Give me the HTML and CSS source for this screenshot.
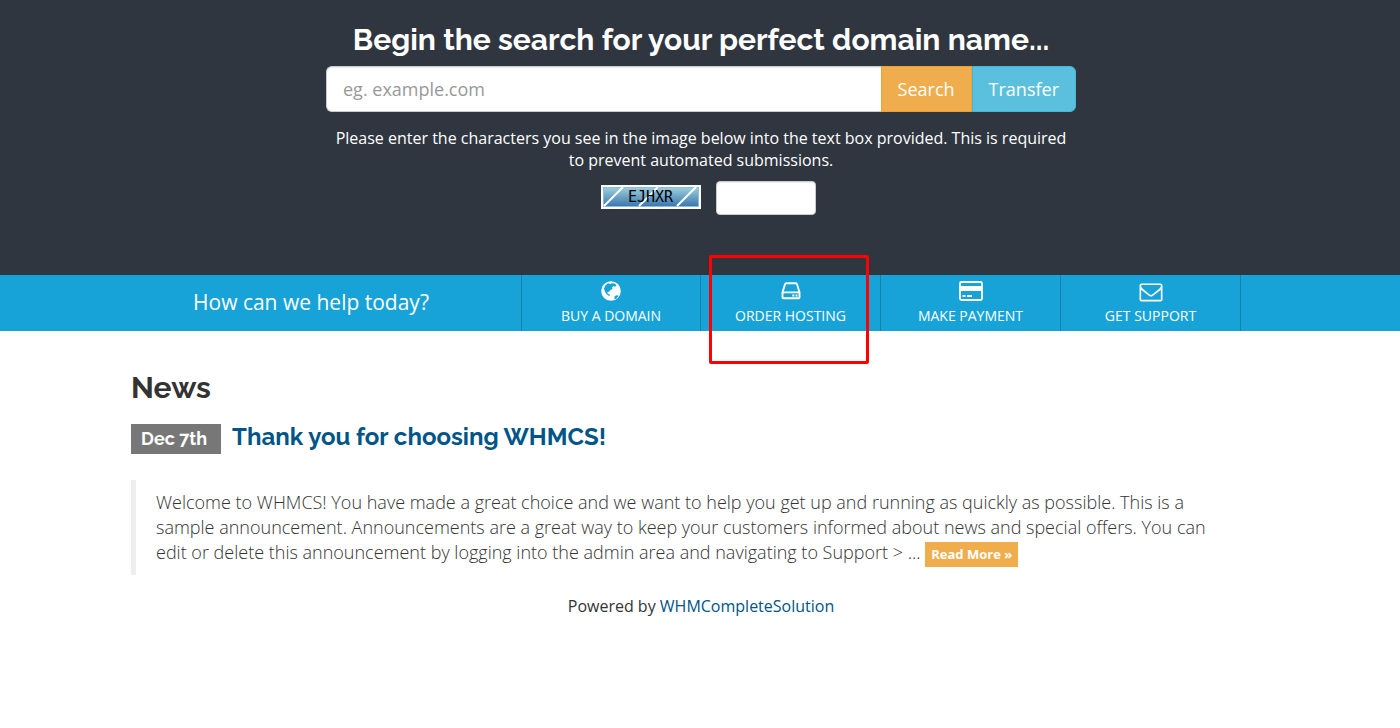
FILE: index.html
```html
<!DOCTYPE html>
<html lang="en">
<head>
<meta charset="utf-8">
<title>Client Area</title>
<link rel="stylesheet" href="styles.css">
</head>
<body>
<section class="hero">
  <form class="domain-search">
    <h2 class="hero-title">Begin the search for your perfect domain name...</h2>
    <div class="search-group">
      <input class="search-input" type="text" placeholder="eg. example.com" aria-label="Domain name">
      <button class="btn btn-search" type="submit">Search</button>
      <button class="btn btn-transfer" type="submit">Transfer</button>
    </div>
    <p class="captcha-text">Please enter the characters you see in the image below into the text box provided. This is required to prevent automated submissions.</p>
    <div class="captcha-row">
      <svg class="captcha-image" viewBox="0 0 100 24" role="img" aria-label="Captcha">
        <defs><linearGradient id="sky" x1="0" y1="0" x2="0" y2="1"><stop offset="0" stop-color="#9ccfdc"/><stop offset="1" stop-color="#3a76ae"/></linearGradient></defs>
        <rect width="100" height="24" fill="#fff"/>
        <rect x="2.500" y="2.500" width="95" height="19" fill="url(#sky)" stroke="#8dbdd8"/>
        <path d="M3 21 22 2M38 21 57 2M76 21 95 2" stroke="#fff" stroke-width="2"/>
        <text class="captcha-code" x="27" y="17">EJHXR</text>
      </svg>
      <input class="captcha-input" type="text" maxlength="5" aria-label="Captcha characters">
    </div>
  </form>
</section>
<nav class="shortcuts">
  <div class="container shortcuts-row">
    <p class="shortcuts-title">How can we help today?</p>
    <ul class="shortcuts-list">
      <li><a class="shortcut shortcut-first" href="#">
        <svg class="icon" viewBox="0 0 26 22"><circle cx="13" cy="11" r="9.800" fill="#fff"/><path fill="#17a3d7" d="M7.500 5.200 10 3.300l2.300.8L14 3.200l3.300.6 1 2-1.300 1-1.500-.8-1.600 1.600.6 1.500-2 1-1.500 1.700-1.600.3.300 1.700 1.800.4.400 1.700-1-.2-2.400-1.500L6.800 11.300 6 8.500zM16.500 16.500l1.800-1.300 2.400.6-2.300 2.600-2 .9z"/></svg>
        <span>Buy A Domain</span></a></li>
      <li><a class="shortcut" href="#">
        <svg class="icon" viewBox="0 0 26 22"><path d="M4.500 12v5.300q0 .9.900.9h15.200q.9 0 .9-.9V12M4.500 12.400h17M4.500 12.200 7 4.200q.3-.9 1.200-.9h9.600q.9 0 1.200.9l2.500 8" fill="none" stroke="#fff" stroke-width="1.900"/><path d="M14.300 14.400h2v2h-2zM17.500 14.400h2v2h-2z" fill="#fff"/></svg>
        <span>Order Hosting</span></a></li>
      <li><a class="shortcut" href="#">
        <svg class="icon" viewBox="0 0 26 22"><rect x="2" y="2" width="22" height="18" rx="1.500" fill="none" stroke="#fff" stroke-width="1.800"/><path d="M2 6h22v5H2zM4.500 15h3v2h-3zM9 15h5v2H9z" fill="#fff"/></svg>
        <span>Make Payment</span></a></li>
      <li><a class="shortcut" href="#">
        <svg class="icon" viewBox="-118 -10 2028 1716"><path fill="#fff" d="M1664 1504v-768q-32 36-69 66-268 206-426 338-51 43-83 67t-86.500 48.500-102.500 24.500h-2q-48 0-102.500-24.500t-86.500-48.500-83-67q-158-132-426-338-37-30-69-66v768q0 13 9.500 22.500t22.500 9.500h1472q13 0 22.500-9.500t9.500-22.500zm0-1051v-24.500l-.5-13-3-12.500-5.500-9-9-7.500-14-2.500h-1472q-13 0-22.500 9.500t-9.500 22.500q0 168 147 284 193 152 401 317 6 5 35 29.500t46 37.500 44.500 31.500 50.500 27.500 43 9h2q20 0 43-9t50.500-27.500 44.500-31.500 46-37.500 35-29.500q208-165 401-317 54-43 100.500-115.500t46.500-131.500zm128-37v1088q0 66-47 113t-113 47h-1472q-66 0-113-47t-47-113v-1088q0-66 47-113t113-47h1472q66 0 113 47t47 113z"/></svg>
        <span>Get Support</span></a></li>
    </ul>
  </div>
  <div class="highlight"></div>
</nav>
<main class="container">
  <h2 class="section-title">News</h2>
  <article>
    <div class="news-head">
      <span class="news-date">Dec 7th</span>
      <h3 class="news-title"><a href="#">Thank you for choosing WHMCS!</a></h3>
    </div>
    <blockquote class="news-body">
      <p>Welcome to WHMCS! You have made a great choice and we want to help you get up and running as quickly as possible. This is a sample announcement. Announcements are a great way to keep your customers informed about news and special offers. You can edit or delete this announcement by logging into the admin area and navigating to Support &gt; ... <a class="read-more" href="#">Read More »</a></p>
    </blockquote>
  </article>
  <footer class="powered">Powered by <a href="#">WHMCompleteSolution</a></footer>
</main>
</body>
</html>
```
FILE: styles.css
```css
* { box-sizing: border-box; }
body { margin: 0; background: #fff; color: #333; font: 400 16px/22px "Open Sans", sans-serif; }
h2, h3, p, ul { margin: 0; padding: 0; }
a { color: #058; text-decoration: none; }
.container { max-width: 1170px; margin: 0 auto; padding: 0 14px 0 16px; }

.hero { background: #30363f; color: #fff; padding: 22px 0 60px 2px; }
.domain-search { max-width: 750px; margin: 0 auto; text-align: center; }
.hero-title { font: 700 30px/36px Raleway, Lato, sans-serif; margin-bottom: 8px; white-space: nowrap; }
.search-group { display: flex; height: 46px; margin-bottom: 15px; }
.search-input { flex: 1; min-width: 0; padding: 0 16px; border: 1px solid #ccc; border-right: 0; border-radius: 6px 0 0 6px; font: 400 18px/24px "Open Sans", sans-serif; box-shadow: inset 0 1px 1px rgba(0, 0, 0, .075); }
.search-input::placeholder { color: #999; }
.btn { border: 1px solid; padding: 0 16px; color: #fff; font: 400 18px/24px "Open Sans", sans-serif; }
.btn-search { background: #f0ad4e; border-color: #eea236; }
.btn-transfer { background: #5bc0de; border-color: #46b8da; border-radius: 0 6px 6px 0; }
.captcha-text { padding: 0 8px; }
.captcha-row { display: flex; justify-content: center; align-items: flex-start; gap: 15px; margin-top: 10px; padding-left: 14px; }
.captcha-image { width: 100px; height: 24px; margin-top: 4px; }
.captcha-code { font: 400 15px "DejaVu Sans Mono", monospace; fill: #000; }
.captcha-input { width: 100px; height: 34px; border: 1px solid #ccc; border-radius: 4px; box-shadow: inset 0 1px 1px rgba(0, 0, 0, .075); }

.shortcuts { position: relative; background: #17a3d7; color: #fff; }
.shortcuts-row { display: flex; }
.shortcuts-title { width: 390px; padding-right: 30px; text-align: center; font-size: 21px; line-height: 54px; }
.shortcuts-list { display: flex; list-style: none; }
.shortcut { display: flex; flex-direction: column; align-items: center; gap: 2px; width: 180px; height: 56px; padding-top: 5px; border-right: 1px solid #1383ac; color: #fff; font-size: 14px; line-height: 24px; text-transform: uppercase; }
.shortcut-first { border-left: 1px solid #1383ac; }
.icon { width: 26px; height: 22px; }
.highlight { position: absolute; left: calc(50% + 9px); top: -20px; width: 160px; height: 109px; border: 3px solid #f00; border-radius: 2px; pointer-events: none; }

.section-title { margin-top: 40px; font: 700 30px/34px Raleway, Lato, sans-serif; }
.news-head { display: flex; align-items: flex-start; gap: 11px; margin-top: 15px; }
.news-date { margin-top: 4px; padding: 0 14px 0 10px; background: #777; color: #fff; font: 700 18px/30px Raleway, Lato, sans-serif; }
.news-title { font: 700 24px/34px Raleway, Lato, sans-serif; }
.news-body { margin: 26px 0 20px; padding: 10px 40px 10px 20px; border-left: 5px solid #eee; font-weight: 300; font-size: 18px; line-height: 25px; }
.read-more { padding: 3px 6px 4px; background: #f0ad4e; color: #fff; font-weight: 700; font-size: 13px; line-height: 18px; }
.powered { text-align: center; }
```
